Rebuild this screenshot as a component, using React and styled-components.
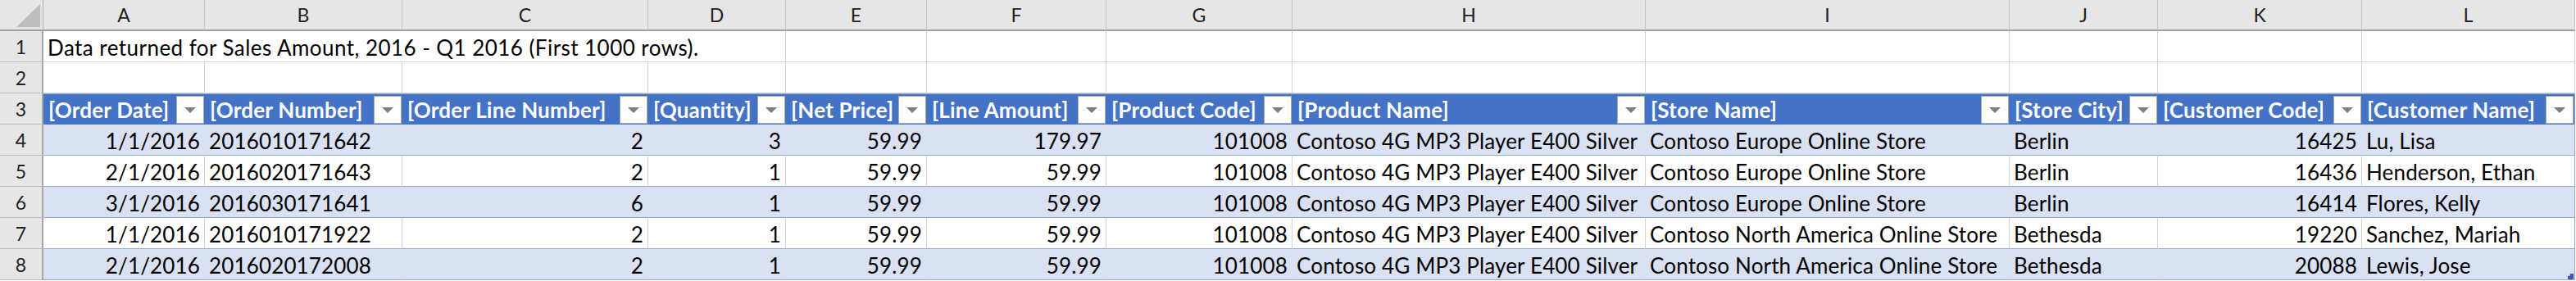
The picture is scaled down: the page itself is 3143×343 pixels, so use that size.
import React from "react";
import styled, { createGlobalStyle, css } from "styled-components";

const COLS = [53, 197, 241, 300, 168, 172, 219, 227, 431, 444, 181, 249, 260];
const TEMPLATE = COLS.map((w) => `${w}px`).join(" ");

const Global = createGlobalStyle`
  html, body { margin: 0; padding: 0; background: #ffffff; overflow: hidden; }
  body { font-family: Lato, "Noto Sans", sans-serif; }
`;

const Sheet = styled.div`
  width: 3143px;
  display: flex;
  flex-direction: column;
`;

const Row = styled.div`
  display: grid;
  grid-template-columns: ${TEMPLATE};
  height: 38px;
`;

const Corner = styled.div`
  position: relative;
  background: #e6e6e6;
  border-right: 1px solid #ababab;
  border-bottom: 2px solid #a0a0a0;
  box-sizing: border-box;
`;

const CornerTriangle = styled.div`
  position: absolute;
  right: 3px;
  bottom: 3px;
  width: 0;
  height: 0;
  border-left: 29px solid transparent;
  border-bottom: 28px solid #bdbdbd;
`;

const ColHead = styled.div`
  background: #e6e6e6;
  border-right: 1px solid #c4c4c4;
  border-bottom: 2px solid #a0a0a0;
  box-sizing: border-box;
  display: flex;
  align-items: center;
  justify-content: center;
  font-size: 23px;
  color: #222222;
`;

const RowHead = styled.div`
  background: #e6e6e6;
  border-right: 2px solid #a6a6a6;
  border-bottom: 1px solid #bdbdbd;
  box-sizing: border-box;
  display: flex;
  align-items: center;
  justify-content: center;
  font-size: 23px;
  color: #222222;
`;

const Cell = styled.div`
  box-sizing: border-box;
  display: flex;
  align-items: center;
  white-space: nowrap;
  overflow: visible;
  font-size: 26px;
  letter-spacing: 0.15px;
  color: #000000;
  padding: 2px 5px 0 5px;
  justify-content: ${(p) => (p.$right ? "flex-end" : "flex-start")};
  grid-column: ${(p) => (p.$span ? `span ${p.$span}` : "auto")};
  ${(p) =>
    p.$kind === "plain" &&
    css`
      background: #ffffff;
      border-right: 1px solid #d4d4d4;
      border-bottom: 1px solid #d4d4d4;
    `}
  ${(p) =>
    p.$kind === "band" &&
    css`
      background: #d9e1f2;
      border-right: 1px solid #d9e1f2;
      border-bottom: 1px solid #8ea9db;
    `}
  ${(p) =>
    p.$kind === "white" &&
    css`
      background: #ffffff;
      border-right: 1px solid #d4d4d4;
      border-bottom: 1px solid #8ea9db;
    `}
  ${(p) =>
    p.$last &&
    css`
      border-right: 1px solid #8ea9db;
    `}
`;

const TitleCell = styled(Cell)`
  letter-spacing: 0.45px;
`;

const HeaderCell = styled.div`
  box-sizing: border-box;
  background: #4472c4;
  border-top: 1px solid #8ea9db;
  display: flex;
  align-items: center;
  justify-content: space-between;
  padding: 0 1px 0 6px;
  white-space: nowrap;
  font-size: 26px;
  letter-spacing: 0.2px;
  font-weight: 700;
  color: #ffffff;
  ${(p) =>
    p.$last &&
    css`
      border-right: 1px solid #8ea9db;
    `}
`;

const FilterButton = styled.div`
  box-sizing: border-box;
  width: 34px;
  height: 34px;
  background: #ffffff;
  border: 1px solid #ababab;
  display: flex;
  align-items: center;
  justify-content: center;
  flex-shrink: 0;
`;

const FilterArrow = styled.div`
  width: 0;
  height: 0;
  border-left: 7px solid transparent;
  border-right: 7px solid transparent;
  border-top: 7px solid #7f7f7f;
  margin-top: 2px;
`;

const LastCell = styled(Cell)`
  position: relative;
`;

const ResizeHandle = styled.div`
  position: absolute;
  right: 1px;
  bottom: 0;
  width: 7px;
  height: 7px;
  background: #4158b8;
  clip-path: polygon(100% 0, 100% 100%, 0 100%, 0 40%, 40% 40%, 40% 0);
`;

const LETTERS = ["A", "B", "C", "D", "E", "F", "G", "H", "I", "J", "K", "L"];

const HEADERS = [
  "[Order Date]",
  "[Order Number]",
  "[Order Line Number]",
  "[Quantity]",
  "[Net Price]",
  "[Line Amount]",
  "[Product Code]",
  "[Product Name]",
  "[Store Name]",
  "[Store City]",
  "[Customer Code]",
  "[Customer Name]",
];

const RIGHT = [true, false, true, true, true, true, true, false, false, false, true, false];

const PRODUCT = "Contoso 4G MP3 Player E400 Silver";
const DATA = [
  ["1/1/2016", "2016010171642", "2", "3", "59.99", "179.97", "101008", PRODUCT, "Contoso Europe Online Store", "Berlin", "16425", "Lu, Lisa"],
  ["2/1/2016", "2016020171643", "2", "1", "59.99", "59.99", "101008", PRODUCT, "Contoso Europe Online Store", "Berlin", "16436", "Henderson, Ethan"],
  ["3/1/2016", "2016030171641", "6", "1", "59.99", "59.99", "101008", PRODUCT, "Contoso Europe Online Store", "Berlin", "16414", "Flores, Kelly"],
  ["1/1/2016", "2016010171922", "2", "1", "59.99", "59.99", "101008", PRODUCT, "Contoso North America Online Store", "Bethesda", "19220", "Sanchez, Mariah"],
  ["2/1/2016", "2016020172008", "2", "1", "59.99", "59.99", "101008", PRODUCT, "Contoso North America Online Store", "Bethesda", "20088", "Lewis, Jose"],
];

export default function App() {
  return (
    <>
      <Global />
      <Sheet>
        <Row>
          <Corner>
            <CornerTriangle />
          </Corner>
          {LETTERS.map((l) => (
            <ColHead key={l}>{l}</ColHead>
          ))}
        </Row>

        <Row>
          <RowHead>1</RowHead>
          <TitleCell $kind="plain" $span={4}>
            Data returned for Sales Amount, 2016 - Q1 2016 (First 1000 rows).
          </TitleCell>
          {LETTERS.slice(4).map((l) => (
            <Cell key={l} $kind="plain" />
          ))}
        </Row>

        <Row>
          <RowHead>2</RowHead>
          {LETTERS.map((l) => (
            <Cell key={l} $kind="plain" />
          ))}
        </Row>

        <Row>
          <RowHead>3</RowHead>
          {HEADERS.map((h, i) => (
            <HeaderCell key={h} $last={i === HEADERS.length - 1}>
              <span>{h}</span>
              <FilterButton>
                <FilterArrow />
              </FilterButton>
            </HeaderCell>
          ))}
        </Row>

        {DATA.map((r, ri) => {
          const kind = ri % 2 === 0 ? "band" : "white";
          const isLastRow = ri === DATA.length - 1;
          return (
            <Row key={ri}>
              <RowHead>{ri + 4}</RowHead>
              {r.map((v, ci) => {
                const last = ci === r.length - 1;
                if (last && isLastRow) {
                  return (
                    <LastCell key={ci} $kind={kind} $right={RIGHT[ci]} $last>
                      {v}
                      <ResizeHandle />
                    </LastCell>
                  );
                }
                return (
                  <Cell key={ci} $kind={kind} $right={RIGHT[ci]} $last={last}>
                    {v}
                  </Cell>
                );
              })}
            </Row>
          );
        })}
      </Sheet>
    </>
  );
}
